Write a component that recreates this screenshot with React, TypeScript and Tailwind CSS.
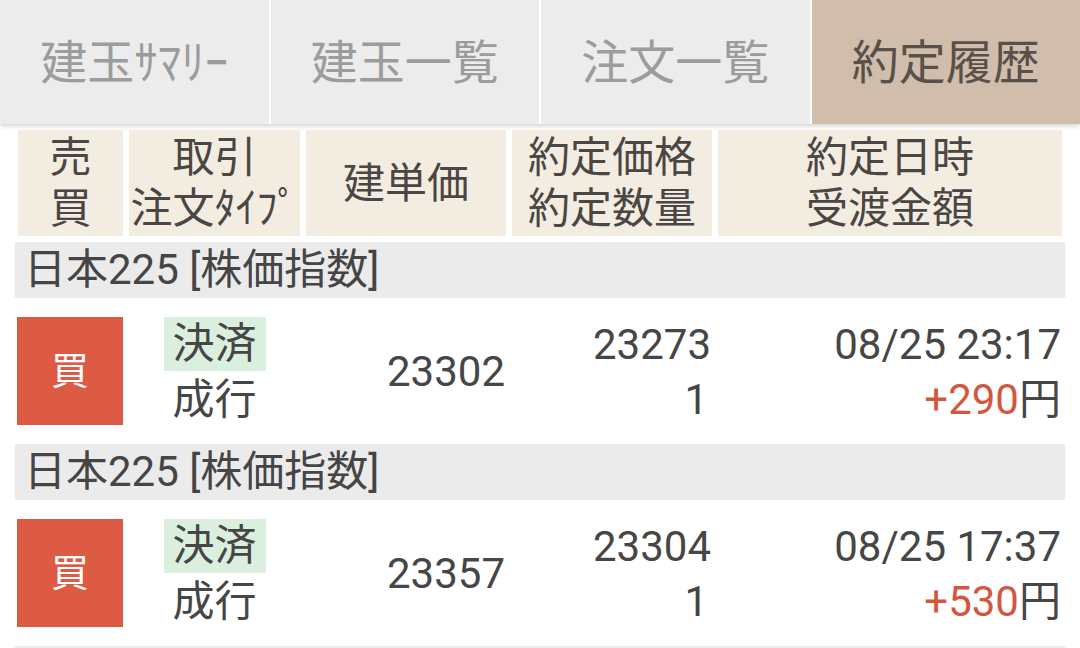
import React from "react";

const FONT = { fontFamily: 'Roboto, "Noto Sans CJK JP", sans-serif' };

const cols = "grid grid-cols-[111px_177px_206px_206px_350px]";

function Tab({ label, active, first }: { label: string; active?: boolean; first?: boolean }) {
  return (
    <div
      className={`flex-1 flex items-center justify-center text-[47px] leading-none ${
        active ? "bg-[#d0bdab] text-[#5a504a]" : "bg-[#ececec] text-[#9c9c9c]"
      } ${first ? "" : "border-l-2 border-white"}`}
    >
      {label}
    </div>
  );
}

function HeaderCell({ lines }: { lines: string[] }) {
  return (
    <div className="p-[3px]">
      <div className="h-[106px] bg-[#f3ece1] flex flex-col items-center justify-center text-[42px] leading-[51px] text-[#4a4643]">
        {lines.map((l, i) => (
          <div key={i}>{l}</div>
        ))}
      </div>
    </div>
  );
}

function GroupBar() {
  return (
    <div className="h-[56px] bg-[#ebebeb] flex items-center pl-[9px] text-[42px] leading-none text-[#454545]">
      日本225 [株価指数]
    </div>
  );
}

function DataRow({
  price,
  execPrice,
  date,
  amount,
}: {
  price: string;
  execPrice: string;
  date: string;
  amount: string;
}) {
  return (
    <div className={`${cols} py-[19px] text-[42px] text-[#464646]`}>
      <div className="pl-[2px] pr-[3px]">
        <div className="h-[108px] bg-[#dd5b44] flex items-center justify-center text-white text-[38px] leading-none">
          買
        </div>
      </div>
      <div className="px-[3px] flex flex-col items-center">
        <div className="h-[54px] w-[102px] bg-[#dbefdf] flex items-center justify-center leading-none">
          決済
        </div>
        <div className="h-[54px] flex items-center leading-none pt-[3px]">成行</div>
      </div>
      <div className="px-[4px] flex items-center justify-end leading-none pt-[2px]">{price}</div>
      <div className="px-[3px] flex flex-col items-end">
        <div className="h-[54px] flex items-center leading-none pr-[1px] pt-[2px]">{execPrice}</div>
        <div className="h-[54px] flex items-center leading-none pr-[4px] pt-[4px]">1</div>
      </div>
      <div className="pl-[3px] pr-[4px] flex flex-col items-end">
        <div className="h-[54px] flex items-center leading-none pt-[2px]">{date}</div>
        <div className="h-[54px] flex items-center leading-none pt-[4px]">
          <span className="text-[#d2573e]">{amount}</span>
          <span>円</span>
        </div>
      </div>
    </div>
  );
}

export default function App() {
  return (
    <div className="w-[1080px] h-[648px] overflow-hidden bg-white" style={FONT}>
      <div className="flex h-[124px] shadow-[0_2px_5px_rgba(0,0,0,0.18)] relative z-10">
        <Tab label="建玉ｻﾏﾘｰ" first />
        <Tab label="建玉一覧" />
        <Tab label="注文一覧" />
        <Tab label="約定履歴" active />
      </div>
      <div className="w-[1050px] ml-[15px] pt-[3px]">
        <div className={cols}>
          <HeaderCell lines={["売", "買"]} />
          <HeaderCell lines={["取引", "注文ﾀｲﾌﾟ"]} />
          <HeaderCell lines={["建単価"]} />
          <HeaderCell lines={["約定価格", "約定数量"]} />
          <HeaderCell lines={["約定日時", "受渡金額"]} />
        </div>
        <div className="mt-[3px]">
          <GroupBar />
          <DataRow price="23302" execPrice="23273" date="08/25 23:17" amount="+290" />
          <GroupBar />
          <DataRow price="23357" execPrice="23304" date="08/25 17:37" amount="+530" />
          <div className="h-[56px] bg-[#ebebeb]" />
        </div>
      </div>
    </div>
  );
}
